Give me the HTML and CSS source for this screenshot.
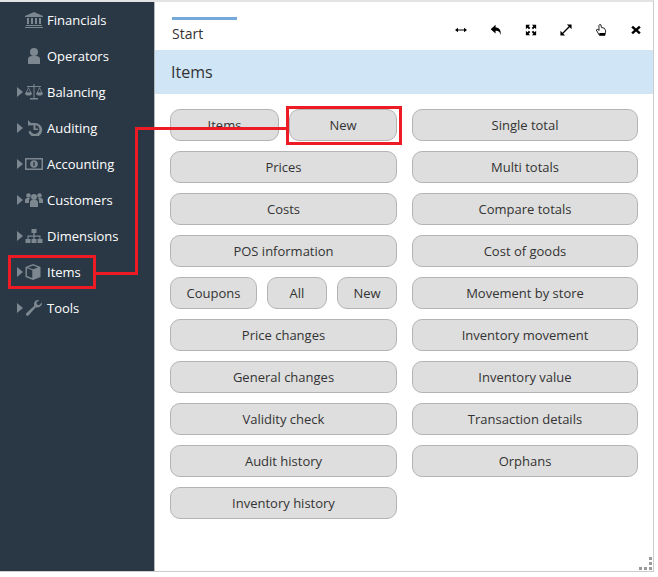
FILE: index.html
```html
<!DOCTYPE html>
<html lang="en">
<head>
  <meta charset="UTF-8">
  <meta name="viewport" content="width=device-width, initial-scale=1.0">
  <title>Items</title>
  <link rel="stylesheet" href="styles.css">
</head>
<body>
  <div class="app">
    <nav class="sidebar">
      <div class="nav-item"><span class="arrow off"></span>
        <svg class="nav-icon" viewBox="0 0 18 16"><path d="M9 0 18 4V5H0V4ZM2 6H4V12H2ZM6 6H8V12H6ZM10 6H12V12H10ZM14 6H16V12H14ZM1 13H17V14H1ZM0 15H18V16H0Z"/></svg>
        <span>Financials</span></div>
      <div class="nav-item"><span class="arrow off"></span>
        <svg class="nav-icon" viewBox="0 0 18 16"><circle cx="9" cy="4" r="4"/><path d="M3 16V11C3 9 5 8 7 8H11C13 8 15 9 15 11V16Z"/></svg>
        <span>Operators</span></div>
      <div class="nav-item"><span class="arrow"></span>
        <svg class="nav-icon" viewBox="0 0 18 16"><path d="M8.500 0H9.500V14H13V15.500H5V14H8.500Z"/><path d="M2 2H16V3H2Z"/><path d="M3.500 3 6.500 9H.500ZM3.500 4.500 1.800 8.200H5.200ZM14.500 3 17.500 9H11.500ZM14.500 4.500 12.800 8.200H16.200Z" fill-rule="evenodd"/><path d="M0 9H7C7 11 5.500 11.500 3.500 11.500S0 11 0 9ZM11 9H18C18 11 16.500 11.500 14.500 11.500S11 11 11 9Z"/></svg>
        <span>Balancing</span></div>
      <div class="nav-item"><span class="arrow"></span>
        <svg class="nav-icon" viewBox="0 0 18 16"><path d="M3 0 6 3H10A7 7 0 1 1 3.500 12L5.500 10.500A4.500 4.500 0 1 0 8.500 5.200L3 5.500Z"/><path d="M8.500 5H10.500V8.500H13V10H8.500Z"/></svg>
        <span>Auditing</span></div>
      <div class="nav-item"><span class="arrow"></span>
        <svg class="nav-icon" viewBox="0 0 18 14"><path fill-rule="evenodd" d="M0 1H18V13H0ZM1.500 2.500V11.500H16.500V2.500ZM9 3.200A3.800 3.800 0 1 1 9 10.800 3.800 3.800 0 0 1 9 3.200ZM8.300 5V9H9.700V5Z"/></svg>
        <span>Accounting</span></div>
      <div class="nav-item"><span class="arrow"></span>
        <svg class="nav-icon" viewBox="0 0 18 16"><circle cx="9" cy="5" r="3"/><circle cx="3.500" cy="3.500" r="2.300"/><circle cx="14.500" cy="3.500" r="2.300"/><path d="M5 15V10C5 9 6 8 7 8H11C12 8 13 9 13 10V15ZM0 11V8C0 7 1 6 2 6H5L4 8V11ZM18 11V8C18 7 17 6 16 6H13L14 8V11Z"/></svg>
        <span>Customers</span></div>
      <div class="nav-item"><span class="arrow"></span>
        <svg class="nav-icon" viewBox="0 0 18 16"><path d="M6.500 1H11.500V5H9.700V7.500H15.500V11H17.500V15H12.500V11H14.300V8.800H9.700V11H11.500V15H6.500V11H8.300V8.800H3.700V11H5.500V15H.500V11H2.500V7.500H8.300V5H6.500Z"/></svg>
        <span>Dimensions</span></div>
      <div class="nav-item"><span class="arrow"></span>
        <svg class="nav-icon" viewBox="0 0 18 16"><path fill-rule="evenodd" d="M8 0 15.500 3V13L8 16 .5 13V3ZM2 4.200V12L7.300 14.100V6.300ZM8 1.500 3 3.400 8 5.300 13 3.400Z"/></svg>
        <span>Items</span></div>
      <div class="nav-item"><span class="arrow"></span>
        <svg class="nav-icon" viewBox="0 0 18 16"><path d="M16.800 2.500 14 5.200 12 4.500 11.500 2.500 14.200.3C11.500-.5 9 1.500 9 4.200L9.300 5.800 1.500 13C.5 14 .8 15 1.500 15.500S3 16 4 15L10.800 7.300C13.800 8.300 17.500 6 16.800 2.500Z"/></svg>
        <span>Tools</span></div>
    </nav>

    <main class="panel">
      <header class="topbar">
        <div class="tab">Start</div>
        <div class="tools">
          <svg viewBox="0 0 14 14"><path d="M0 7 3.500 4.500V6.300H10.500V4.500L14 7 10.500 9.500V7.700H3.500V9.500Z"/></svg>
          <svg viewBox="0 0 14 14"><path d="M6.500 1V4.200C10.500 4.200 13 6.500 12.500 13 11.500 9 10 7.800 6.500 7.800V11L.8 6Z"/></svg>
          <svg viewBox="0 0 14 14"><path d="M1 1H6L4.300 2.700 6.200 4.600 4.600 6.200 2.700 4.300 1 6ZM13 1V6L11.300 4.300 9.400 6.200 7.800 4.600 9.700 2.700 8 1ZM1 13V8L2.700 9.700 4.600 7.800 6.200 9.400 4.300 11.300 6 13ZM13 13H8L9.700 11.300 7.800 9.400 9.400 7.800 11.300 9.700 13 8Z"/></svg>
          <svg viewBox="0 0 14 14"><path d="M13.500.5V6L11.300 3.800 3.800 11.300 6 13.500H.5V8L2.700 10.200 10.200 2.700 8 .5Z"/></svg>
          <svg viewBox="0 0 14 14"><path fill="#fff" stroke="#000" stroke-width="1" d="M5.500.7 7 1 7.500 4 11 5 12.500 8 11.500 13H5L1.500 7 2.500 6 4.800 7.500 4.500 1.500Z"/><path d="M5 10.500H11.800V13.500H5Z"/></svg>
          <svg viewBox="0 0 14 14"><path d="M3.500 2 7 5.300 10.500 2 12.500 4 9.200 7 12.500 10 10.500 12 7 8.700 3.500 12 1.500 10 4.800 7 1.500 4Z"/></svg>
        </div>
      </header>

      <h1 class="title">Items</h1>

      <div class="columns">
        <div class="column">
          <div class="row"><a class="btn half">Items</a><a class="btn grow">New</a></div>
          <a class="btn">Prices</a>
          <a class="btn">Costs</a>
          <a class="btn">POS information</a>
          <div class="row"><a class="btn coupons">Coupons</a><a class="btn all">All</a><a class="btn all">New</a></div>
          <a class="btn">Price changes</a>
          <a class="btn">General changes</a>
          <a class="btn">Validity check</a>
          <a class="btn">Audit history</a>
          <a class="btn">Inventory history</a>
        </div>
        <div class="column">
          <a class="btn">Single total</a>
          <a class="btn">Multi totals</a>
          <a class="btn">Compare totals</a>
          <a class="btn">Cost of goods</a>
          <a class="btn">Movement by store</a>
          <a class="btn">Inventory movement</a>
          <a class="btn">Inventory value</a>
          <a class="btn">Transaction details</a>
          <a class="btn">Orphans</a>
        </div>
      </div>

      <div class="grip"><i></i><i></i><i></i><i></i><i></i></div>
    </main>
  </div>

  <!-- red annotations drawn on top of the screenshot -->
  <div class="mark mark-nav"></div>
  <div class="mark mark-new"></div>
  <div class="line line-a"></div>
  <div class="line line-b"></div>
  <div class="line line-c"></div>
</body>
</html>
```

FILE: styles.css
```css
* {
  box-sizing: border-box;
}

body {
  margin: 0;
  height: 577px;
  background-color: #fff;
  font-family: "Open Sans", Arial, sans-serif;
  font-size: 13px;
  overflow: hidden;
}

.app {
  display: flex;
  width: 654px;
  height: 572px;
  border-top: 2px solid #e3e3e3;
  border-right: 1px solid #ccc;
  border-bottom: 1px solid #ccc;
}

.sidebar {
  width: 155px;
  flex-shrink: 0;
  background-color: #2a3845;
  border-right: 1px solid #b4b9be;
  color: #fff;
}

.nav-item {
  display: flex;
  align-items: center;
  height: 36px;
  padding-left: 17px;
}

.arrow {
  width: 0;
  height: 0;
  margin-right: 2px;
  border-top: 5px solid transparent;
  border-bottom: 5px solid transparent;
  border-left: 6px solid #7d8790;
}

.arrow.off {
  border-left-color: transparent;
}

.nav-icon {
  width: 18px;
  height: 16px;
  margin-right: 4px;
  fill: #7d8790;
}

.panel {
  position: relative;
  flex: 1;
}

.topbar {
  display: flex;
  justify-content: space-between;
  height: 48px;
  padding: 15px 0 0 17px;
}

.tab {
  width: 65px;
  height: 27px;
  padding-top: 4px;
  border-top: 3px solid #74a9dc;
  font-size: 14px;
  line-height: 19px;
  color: #333;
}

.tools {
  display: flex;
  gap: 23px;
  padding: 7px 11px 0 0;
}

.tools svg {
  width: 12px;
  height: 12px;
}

.title {
  margin: 0;
  height: 44px;
  padding-left: 16px;
  background-color: #d0e5f5;
  font-size: 16px;
  font-weight: 400;
  line-height: 44px;
  color: #333;
}

.columns {
  display: flex;
  gap: 15px;
  padding: 15px 0 0 15px;
}

.column {
  display: flex;
  flex-direction: column;
  gap: 10px;
  width: 227px;
}

.column + .column {
  width: 226px;
}

.row {
  display: flex;
  gap: 10px;
}

.btn {
  display: block;
  height: 32px;
  border: 1px solid #b4b4b4;
  border-radius: 10px;
  background-color: #dedede;
  color: #333;
  line-height: 30px;
  text-align: center;
}

.half {
  width: 109px;
}

.grow {
  flex: 1;
}

.coupons {
  width: 87px;
}

.all {
  width: 60px;
}

.grip {
  position: absolute;
  right: 1px;
  bottom: 1px;
  display: grid;
  grid-template-columns: repeat(3, 3px);
  grid-auto-rows: 3px;
  gap: 2px;
}

.grip i {
  background-color: #9a9a9a;
}

.grip i:nth-child(1) {
  grid-column: 3;
}

.grip i:nth-child(2) {
  grid-column: 3;
}

.mark {
  position: absolute;
  border: 3px solid #ed1c24;
}

.mark-nav {
  left: 8px;
  top: 255px;
  width: 88px;
  height: 34px;
}

.mark-new {
  left: 286px;
  top: 106px;
  width: 116px;
  height: 39px;
}

.line {
  position: absolute;
  background-color: #ed1c24;
}

.line-a {
  left: 96px;
  top: 272px;
  width: 42px;
  height: 3px;
}

.line-b {
  left: 135px;
  top: 127px;
  width: 3px;
  height: 148px;
}

.line-c {
  left: 135px;
  top: 127px;
  width: 152px;
  height: 3px;
}
```
